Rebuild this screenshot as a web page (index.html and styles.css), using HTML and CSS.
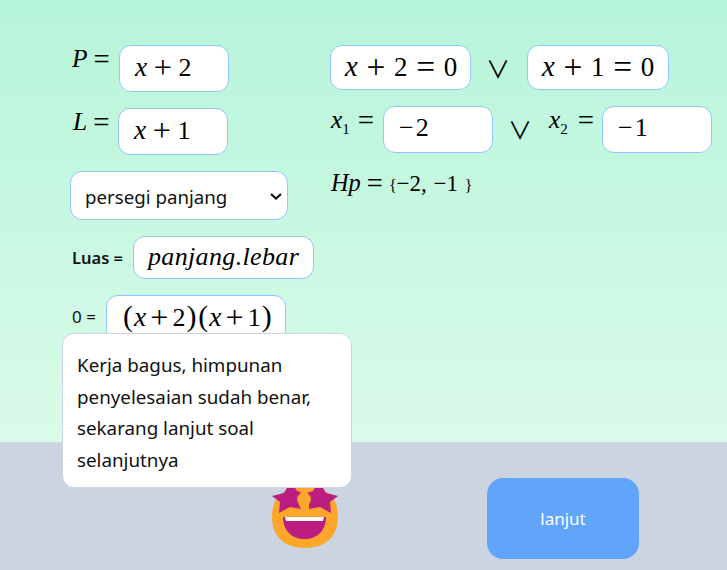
FILE: index.html
```html
<!DOCTYPE html>
<html lang="en">
<head>
    <meta charset="UTF-8">
    <meta name="viewport" content="width=device-width, initial-scale=1.0">
    <title>Persamaan Kuadrat</title>
    <link rel="stylesheet" href="styles.css">
</head>
<body>
    <main class="board">
        <section class="col-left">
            <div class="row row-p">
                <span class="math label"><i>P</i><span class="op">=</span></span>
                <div class="box box-input math"><i>x</i><span class="op">+</span>2</div>
            </div>
            <div class="row row-l">
                <span class="math label"><i>L</i><span class="op">=</span></span>
                <div class="box box-input math"><i>x</i><span class="op">+</span>1</div>
            </div>
            <div class="select-wrap">
                <select class="shape-select">
                    <option>persegi panjang</option>
                    <option>persegi</option>
                    <option>segitiga</option>
                </select>
                <svg class="chevron" width="12" height="7" viewBox="0 0 12 7"><path d="M1 1 L6 5.500 L11 1" fill="none" stroke="#111" stroke-width="2.200"/></svg>
            </div>
            <div class="row row-luas">
                <span class="text-label strong">Luas =</span>
                <div class="box box-formula math"><i>panjang.lebar</i></div>
            </div>
            <div class="row row-zero">
                <span class="text-label">0 =</span>
                <div class="box box-factor math"><span class="paren">(</span><i>x</i><span class="op">+</span>2<span class="paren">)</span><span class="paren">(</span><i>x</i><span class="op">+</span>1<span class="paren">)</span></div>
            </div>
        </section>
        <section class="col-right">
            <div class="row row-eq">
                <div class="box box-eq math"><i>x</i><span class="op">+</span>2<span class="op">=</span>0</div>
                <span class="or">∨</span>
                <div class="box box-eq box-eq-second math"><i>x</i><span class="op">+</span>1<span class="op">=</span>0</div>
            </div>
            <div class="row row-roots">
                <span class="math label"><i>x</i><sub>1</sub><span class="op">=</span></span>
                <div class="box box-input math">−2</div>
                <span class="or">∨</span>
                <span class="math label label-second"><i>x</i><sub>2</sub><span class="op">=</span></span>
                <div class="box box-input math">−1</div>
            </div>
            <div class="math hp"><i>Hp</i><span class="op">=</span><small>{</small>−2, −1 <small>}</small></div>
        </section>
    </main>
    <footer class="bottom">
        <svg class="emoji" width="68" height="62" viewBox="0 0 68 62">
            <path d="M1 30 C1 8 14 0 34 0 C54 0 67 8 67 30 C67 50 54 61 34 61 C14 61 1 50 1 30 Z" fill="#fca72b"/>
            <path d="M1 9 L13 6 L20 -6 L26 4 L39 8 L30 17 L30 22 L19 20 L8 26 L9 15 Z" fill="#bb1d80"/>
            <path d="M67 9 L55 6 L48 -6 L42 4 L29 8 L38 17 L38 22 L49 20 L60 26 L59 15 Z" fill="#bb1d80"/>
            <path d="M33 1 C35 6 40 8 40 12 C40 15 37 18 37 21 L29 21 C29 18 26 15 26 12 C26 8 31 6 33 1 Z" fill="#fca72b"/>
            <path d="M12 30 L55 30 C55 44 46 52 33.500 52 C21 52 12 44 12 30 Z" fill="#bb1d80"/>
            <path d="M14 30 L53 30 L52 34 L15 34 Z" fill="#fff"/>
        </svg>
        <button class="next-btn">lanjut</button>
    </footer>
    <div class="bubble">Kerja bagus, himpunan penyelesaian sudah benar, sekarang lanjut soal selanjutnya</div>
</body>
</html>
```

FILE: styles.css
```css
* {
    box-sizing: border-box;
}
html, body {
    margin: 0;
    padding: 0;
}
body {
    font-family: "Noto Sans", Arial, sans-serif;
    width: 727px;
    height: 570px;
    overflow: hidden;
    color: #111;
}
.board {
    display: flex;
    height: 442px;
    padding: 45px 0 0 70px;
    background: linear-gradient(#b6f5d9, #dafbe9);
}
.col-left {
    width: 260px;
    flex-shrink: 0;
}
.col-right {
    flex: 1;
}
.row {
    display: flex;
    align-items: flex-start;
}
.math {
    font-family: "Liberation Serif", serif;
    font-size: 26px;
    color: #000;
}
.math i {
    font-size: 1.06em;
}
.op {
    font-size: 1.24em;
    line-height: 0;
    margin: 0 6.500px;
    vertical-align: -2px;
}
.paren {
    font-size: 1.15em;
    line-height: 0;
    margin: 0 1px;
}
.label {
    font-size: 24px;
    line-height: 28px;
    white-space: nowrap;
}
.label .op {
    font-size: 1.2em;
    margin: 0 0 0 6px;
}
.box {
    background: #fff;
    border: 1px solid #93c5fd;
    border-radius: 12px;
    padding-left: 15px;
    line-height: 42px;
    white-space: nowrap;
}
.box-input {
    width: 110px;
    height: 47px;
}
.row-p {
    margin-left: 2px;
}
.row-p .label {
    width: 47px;
}
.row-l {
    margin: 16px 0 16px 3px;
}
.row-l .label {
    width: 45px;
}
.select-wrap {
    position: relative;
    width: 218px;
}
.shape-select {
    display: block;
    width: 100%;
    height: 49px;
    padding: 2px 0 0 14px;
    background: #fff;
    border: 1px solid #93c5fd;
    border-radius: 12px;
    font-family: "Noto Sans", Arial, sans-serif;
    font-size: 18.700px;
    color: #111;
    appearance: none;
}
.chevron {
    position: absolute;
    right: 6px;
    top: 22px;
}
.text-label {
    font-size: 17px;
    white-space: nowrap;
    margin-top: 10px;
}
.strong {
    font-weight: 600;
    font-size: 16.500px;
    width: 61px;
}
.row-luas {
    margin: 16px 0 16px 2px;
}
.box-formula {
    width: 181px;
    height: 43px;
    padding-left: 14px;
    line-height: 40px;
}
.box-formula i {
    font-size: 26px;
    letter-spacing: 0.35px;
}
.row-zero {
    margin-left: 2px;
}
.row-zero .text-label {
    width: 34px;
}
.box-factor {
    width: 180px;
    height: 47px;
}
.box-factor .op {
    margin: 0 4px;
}
.box-eq {
    width: 141px;
    height: 45px;
    padding-left: 14px;
    font-size: 27px;
    line-height: 41px;
}
.box-eq .op {
    margin: 0 8.700px;
}
.box-eq-second {
    width: 142px;
}
.or {
    width: 20px;
    margin: 6px 21px 0 15px;
    font-family: "Noto Sans CJK JP", sans-serif;
    font-size: 24px;
    line-height: 34px;
    text-align: center;
    color: #000;
}
.row-roots {
    margin: 16px 0 0 1px;
}
.row-roots .label {
    width: 52px;
}
.row-roots .label .op {
    margin-left: 8px;
}
.row-roots .label-second {
    width: 53px;
}
.row-roots .label-second .op {
    margin-left: 10px;
}
.row-roots .box {
    letter-spacing: 2px;
}
.row-roots sub {
    font-size: 15px;
    line-height: 0;
}
.hp {
    margin-top: 17px;
    margin-left: 1px;
    font-size: 23px;
    line-height: 26px;
    word-spacing: 1px;
}
.hp .op {
    margin: 0 6px;
}
.hp small {
    font-size: 16px;
}
.bottom {
    display: flex;
    align-items: flex-start;
    height: 128px;
    background: #cbd5e1;
}
.emoji {
    margin: 45px 0 0 271px;
    overflow: visible;
}
.next-btn {
    width: 152px;
    height: 81px;
    margin: 36px 0 0 148px;
    background: #60a5fa;
    color: #fff;
    border: none;
    border-radius: 16px;
    font-family: "Noto Sans", Arial, sans-serif;
    font-size: 17px;
}
.bubble {
    position: absolute;
    left: 62px;
    top: 333px;
    width: 290px;
    height: 155px;
    padding: 16px 14px;
    background: #fff;
    border: 1px solid #cbd5e1;
    border-radius: 12px;
    font-size: 18.800px;
    line-height: 31.500px;
    color: #111;
}
```
